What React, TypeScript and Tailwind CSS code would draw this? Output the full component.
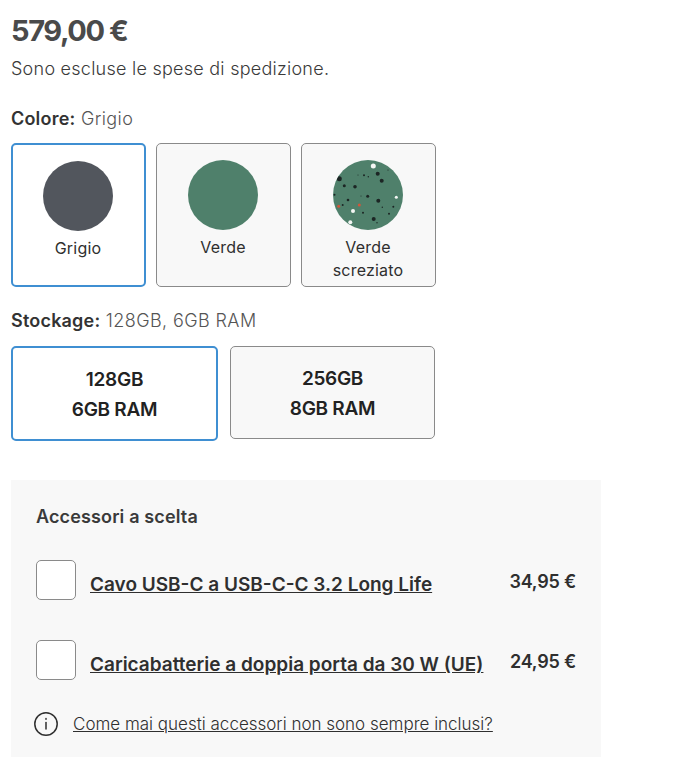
import React from "react";

const blackDots = [
  [6.3, 18.7, 2.5], [44.7, 13.7, 2], [48.7, 20.7, 2], [22, 26.7, 1.8], [11.3, 25.7, 1.5],
  [31, 15.3, 1], [34.7, 36.3, 1.5], [45.3, 40.7, 2], [15, 40, 1.3], [40.7, 59, 2],
  [56, 53.7, 1], [30, 52.7, 1], [1.5, 34.7, 1], [9.7, 45, 1], [60.3, 46.7, 1],
  [49.3, 47.3, 0.7], [44, 62.7, 0.7], [35.3, 16.7, 0.7], [25, 15, 0.5], [55, 10, 0.6], [28, 36, 0.5],
];
const whiteDots = [
  [40.3, 6, 2.5], [20, 51, 2], [17.3, 62.3, 2], [63.3, 37.3, 1.5],
];

const Speckled = () => (
  <svg width="70" height="70" viewBox="0 0 70 70" className="block">
    <defs>
      <clipPath id="speck">
        <circle cx="35" cy="35" r="35" />
      </clipPath>
    </defs>
    <g clipPath="url(#speck)">
      <rect width="70" height="70" fill="#4f806b" />
      {blackDots.map(([x, y, r], i) => (
        <circle key={i} cx={x} cy={y} r={r} fill="#1c2524" />
      ))}
      {whiteDots.map(([x, y, r], i) => (
        <circle key={i} cx={x} cy={y} r={r} fill="#f4f6f4" />
      ))}
      <circle cx="26.3" cy="45" r="1.5" fill="#d2553a" />
      <circle cx="5.7" cy="46.3" r="1.5" fill="#d2553a" />
    </g>
  </svg>
);

const ColorCard = ({ name, selected, children }: { name: React.ReactNode; selected?: boolean; children: React.ReactNode }) => (
  <div
    className={
      selected
        ? "flex h-[144px] w-[135px] flex-col items-center rounded-[5px] border-2 border-[#3f8fd2] bg-white pt-[16px] pr-[1px]"
        : "flex h-[144px] w-[135px] flex-col items-center rounded-[5px] border border-[#8a8a8a] bg-[#f8f8f8] pt-[16px] pr-[1px]"
    }
  >
    {children}
    <div className="mt-[6px] text-center text-[16px] leading-[23px] tracking-[0.2px] text-[#2f2f2f]">{name}</div>
  </div>
);

const StorageCard = ({ top, bottom, selected }: { top: string; bottom: string; selected?: boolean }) => (
  <div
    className={
      selected
        ? "flex h-[95px] w-[207px] flex-col items-center justify-center rounded-[5px] border-2 border-[#3f8fd2] bg-white pt-[2px] text-[19px] leading-[30px] font-semibold tracking-[-0.3px] text-[#222]"
        : "flex h-[93px] w-[205px] flex-col items-center justify-center rounded-[5px] border border-[#8a8a8a] bg-[#f8f8f8] pt-[2px] text-[19px] leading-[30px] font-semibold tracking-[-0.3px] text-[#222]"
    }
  >
    <div>{top}</div>
    <div>{bottom}</div>
  </div>
);

const Accessory = ({ title, price }: { title: string; price: string }) => (
  <div className="flex h-[40px] w-[540px]">
    <div className="h-[40px] w-[40px] shrink-0 rounded-[5px] border border-[#8a8a8a] bg-white" />
    <a className="mt-[12px] ml-[14px] text-[19px] leading-[25px] font-semibold whitespace-nowrap text-[#2f2f2f] underline">{title}</a>
    <div className="mt-[9px] ml-auto text-[18px] leading-[25px] font-semibold tracking-[-0.2px] whitespace-nowrap text-[#2f2f2f]">{price}</div>
  </div>
);

export default function App() {
  return (
    <div className="h-[757px] w-[675px] overflow-hidden bg-white pl-[10px] font-['Inter',sans-serif]">
      <div className="pt-[12px] pl-[1px] text-[29px] leading-[38px] font-bold tracking-[-1.4px] text-[#4a4a4a]">579,00 €</div>
      <div className="mt-[6px] pl-[1px] text-[18px] leading-[26px] font-light tracking-[0.25px] text-[#3a3a3a]">Sono escluse le spese di spedizione.</div>

      <div className="mt-[24px] pl-[1px] text-[18px] leading-[26px] font-light tracking-[0.4px] text-[#555]">
        <span className="font-semibold tracking-[0.2px] text-[#333]">Colore:</span> Grigio
      </div>
      <div className="mt-[11px] flex gap-[10px] pl-[1px]">
        <ColorCard name="Grigio" selected>
          <div className="h-[70px] w-[70px] rounded-full bg-[#52565d]" />
        </ColorCard>
        <ColorCard name="Verde">
          <div className="h-[70px] w-[70px] rounded-full bg-[#4f806b]" />
        </ColorCard>
        <ColorCard name={<>Verde<br />screziato</>}>
          <Speckled />
        </ColorCard>
      </div>

      <div className="mt-[21px] pl-[1px] text-[18px] leading-[26px] font-light tracking-[0.4px] text-[#555]">
        <span className="font-semibold tracking-[0.2px] text-[#333]">Stockage:</span> 128GB, 6GB RAM
      </div>
      <div className="mt-[12px] flex items-start gap-[12px] pl-[1px]">
        <StorageCard top="128GB" bottom="6GB RAM" selected />
        <StorageCard top="256GB" bottom="8GB RAM" />
      </div>

      <div className="mt-[39px] ml-[1px] h-[277px] w-[590px] bg-[#f8f8f8] px-[25px] pt-[24px]">
        <div className="text-[18px] leading-[26px] font-semibold tracking-[0.14px] text-[#3a3a3a]">Accessori a scelta</div>
        <div className="mt-[30px] flex flex-col gap-[40px]">
          <Accessory title="Cavo USB-C a USB-C-C 3.2 Long Life" price="34,95 €" />
          <Accessory title="Caricabatterie a doppia porta da 30 W (UE)" price="24,95 €" />
        </div>
        <div className="mt-[31px] flex items-center gap-[14px]">
          <svg width="26" height="26" viewBox="0 0 26 26" fill="none" stroke="#2f2f2f" strokeWidth="1.5" strokeLinecap="round" className="-ml-[3px]">
            <circle cx="13" cy="13" r="11.2" />
            <path d="M13 11.5v6.5" />
            <path d="M13 7.6v.6" />
          </svg>
          <a className="text-[17px] leading-[24px] font-light text-[#2f2f2f] underline">Come mai questi accessori non sono sempre inclusi?</a>
        </div>
      </div>
    </div>
  );
}
